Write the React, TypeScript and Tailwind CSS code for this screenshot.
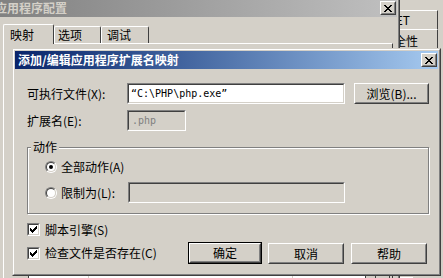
import React from "react";

/* ── Classic 3D frames ─────────────────────────────────── */
function Raised({ className = "", children }: { className?: string; children?: React.ReactNode }) {
  return (
    <div className={`border border-t-white border-l-white border-b-[#404040] border-r-[#404040] bg-[#d4d0c8] ${className}`}>
      <div className="w-full h-full border border-t-[#d4d0c8] border-l-[#d4d0c8] border-b-[#808080] border-r-[#808080] flex items-center justify-center">
        {children}
      </div>
    </div>
  );
}

function Sunken({ className = "", inner = "", children }: { className?: string; inner?: string; children?: React.ReactNode }) {
  return (
    <div className={`border border-t-[#808080] border-l-[#808080] border-b-white border-r-white ${className}`}>
      <div className={`w-full h-full border border-t-[#404040] border-l-[#404040] border-b-[#d4d0c8] border-r-[#d4d0c8] flex items-center ${inner}`}>
        {children}
      </div>
    </div>
  );
}

/* ── Pixel glyphs ──────────────────────────────────────── */
const X_PIXELS = [
  [0, 0], [1, 0], [6, 0], [7, 0],
  [1, 1], [2, 1], [5, 1], [6, 1],
  [2, 2], [3, 2], [4, 2], [5, 2],
  [3, 3], [4, 3],
  [2, 4], [3, 4], [4, 4], [5, 4],
  [1, 5], [2, 5], [5, 5], [6, 5],
  [0, 6], [1, 6], [6, 6], [7, 6],
];

const CHECK_PIXELS = [
  [6, 0],
  [5, 1], [6, 1],
  [0, 2], [4, 2], [5, 2], [6, 2],
  [0, 3], [1, 3], [3, 3], [4, 3], [5, 3],
  [0, 4], [1, 4], [2, 4], [3, 4], [4, 4],
  [1, 5], [2, 5], [3, 5],
  [2, 6],
];

function PixelGlyph({ pixels, w, h }: { pixels: number[][]; w: number; h: number }) {
  return (
    <svg width={w} height={h} viewBox={`0 0 ${w} ${h}`} shapeRendering="crispEdges">
      {pixels.map(([x, y]) => (
        <rect key={`${x}-${y}`} x={x} y={y} width="1" height="1" fill="#000" />
      ))}
    </svg>
  );
}

function CloseButton() {
  return (
    <Raised className="w-[16px] h-[14px]">
      <PixelGlyph pixels={X_PIXELS} w={8} h={7} />
    </Raised>
  );
}

function Checkbox() {
  return (
    <Sunken className="w-[13px] h-[13px] shrink-0" inner="bg-white justify-center">
      <PixelGlyph pixels={CHECK_PIXELS} w={7} h={7} />
    </Sunken>
  );
}

function Radio({ checked }: { checked?: boolean }) {
  return (
    <div className="w-[12px] h-[12px] shrink-0 rounded-full border border-t-[#808080] border-l-[#808080] border-b-white border-r-white">
      <div className="w-full h-full rounded-full border border-t-[#404040] border-l-[#404040] border-b-[#d4d0c8] border-r-[#d4d0c8] bg-white flex items-center justify-center">
        {checked && <div className="w-[4px] h-[4px] rounded-full bg-black" />}
      </div>
    </div>
  );
}

/* ── Page ──────────────────────────────────────────────── */
export default function App() {
  return (
    <div className="relative w-[443px] h-[278px] overflow-hidden bg-[#d4d0c8] font-['Noto_Sans_CJK_SC',sans-serif] text-[12px] leading-[14px] text-black">
      {/* Properties window far behind (tabs peeking out) */}
      <div className="absolute left-[330px] top-0 w-[113px] h-[278px] bg-[#d4d0c8]">
        <div className="mt-[10px] w-[108px] h-[19px] border-t border-t-white border-r border-r-[#404040] flex items-center justify-end pr-[27px]">
          ASP.NET
        </div>
        <div className="w-[108px] h-[22px] border-t border-t-white border-r border-r-[#404040] flex items-center justify-end pr-[19px]">
          安全性
        </div>
        <div className="mt-[226px] ml-[70px] w-[13px] h-[10px] bg-white" />
      </div>

      {/* Application configuration dialog (inactive) */}
      <div className="absolute left-[-12px] top-[-4px] w-[412px] h-[300px] bg-[#d4d0c8] border border-t-[#d4d0c8] border-l-[#d4d0c8] border-b-[#404040] border-r-[#404040]">
        <div className="w-full h-full border border-t-white border-l-white border-b-[#808080] border-r-[#808080] p-px flex flex-col">
          <div className="h-[18px] shrink-0 flex items-center justify-between pl-[4px] pr-[1px] bg-linear-to-r from-[#808080] to-[#c0c0c0]">
            <span className="font-bold text-[#d4d0c8]">应用程序配置</span>
            <CloseButton />
          </div>

          <div className="mt-[7px] ml-[12px] h-[19px] flex items-end">
            <div className="relative z-10 -mb-px w-[51px] h-[20px] rounded-t-[2px] bg-[#d4d0c8] border-t border-l border-t-white border-l-white border-r border-r-[#404040] flex items-center pl-[6px]">
              映射
            </div>
            <div className="w-[47px] h-[17px] rounded-t-[2px] border-t border-l border-t-white border-l-white border-r border-r-[#404040] flex items-center pl-[3px]">
              选项
            </div>
            <div className="w-[48px] h-[17px] rounded-t-[2px] border-t border-l border-t-white border-l-white border-r border-r-[#404040] flex items-center pl-[5px]">
              调试
            </div>
          </div>

          <div className="ml-[12px] mr-[4px] flex-1 border-t border-l border-t-white border-l-white border-r border-r-[#404040]">
            <div className="mt-[231px] ml-[24px] h-[20px] flex">
              <div className="w-[61px] bg-white border-l border-l-[#404040] border-r border-r-[#d4d0c8]" />
              <div className="w-[204px] bg-white border-r border-r-[#d4d0c8]" />
              <div className="w-[73px] bg-white border-r border-r-[#404040]" />
              <div className="w-[10px] border-r border-r-[#404040]" />
              <div className="w-[14px] border-r border-r-[#404040]" />
            </div>
          </div>
        </div>
      </div>

      {/* Add / edit extension mapping dialog (active) */}
      <div className="absolute left-[12px] top-[48px] w-[429px] h-[228px] bg-[#d4d0c8] border border-t-[#d4d0c8] border-l-[#d4d0c8] border-b-[#404040] border-r-[#404040]">
        <div className="w-full h-full border border-t-white border-l-white border-b-[#808080] border-r-[#808080] p-px flex flex-col">
          <div className="h-[18px] shrink-0 flex items-center justify-between pl-[3px] pr-[1px] bg-linear-to-r from-[#0a246a] to-[#a6caf0]">
            <span className="font-bold text-white">添加/编辑应用程序扩展名映射</span>
            <CloseButton />
          </div>

          <div className="flex flex-col pl-[12px]">
            {/* Executable */}
            <div className="mt-[14px] h-[21px] flex items-center">
              <span className="w-[100px]">可执行文件(X):</span>
              <Sunken className="w-[218px] h-[21px]" inner="bg-white pl-[2px]">
                <span className="font-['DejaVu_Sans_Mono',monospace] text-[10px]">{"\u201CC:\\PHP\\php.exe\u201D"}</span>
              </Sunken>
              <Raised className="ml-[9px] w-[75px] h-[21px]">浏览(B)...</Raised>
            </div>

            {/* Extension */}
            <div className="mt-[6px] h-[21px] flex items-center">
              <span className="w-[100px]">扩展名(E):</span>
              <Sunken className="w-[59px] h-[21px]" inner="bg-[#d4d0c8] pl-[3px]">
                <span className="font-['DejaVu_Sans_Mono',monospace] text-[10px] text-[#808080]">.php</span>
              </Sunken>
            </div>

            {/* Actions group */}
            <div className="relative mt-[16px] w-[402px] h-[67px] border border-[#808080] shadow-[inset_1px_1px_0_#fff,1px_1px_0_#fff] pt-[9px] pl-[17px]">
              <span className="absolute left-[3px] -top-[8px] px-[2px] bg-[#d4d0c8]">动作</span>
              <div className="h-[20px] flex items-center gap-[4px]">
                <Radio checked />
                <span>全部动作(A)</span>
              </div>
              <div className="mt-[5px] h-[21px] flex items-center">
                <div className="w-[83px] flex items-center gap-[4px]">
                  <Radio />
                  <span>限制为(L):</span>
                </div>
                <Sunken className="w-[217px] h-[21px]" inner="bg-[#d4d0c8]" />
              </div>
            </div>

            {/* Script engine */}
            <div className="mt-[9px] h-[13px] flex items-center gap-[5px]">
              <Checkbox />
              <span>脚本引擎(S)</span>
            </div>

            {/* Verify file + buttons */}
            <div className="mt-[6px] h-[22px] flex items-start">
              <div className="w-[161px] h-[22px] flex items-center gap-[5px]">
                <Checkbox />
                <span>检查文件是否存在(C)</span>
              </div>
              <div className="w-[74px] h-[22px] border border-black">
                <Raised className="w-full h-full">确定</Raised>
              </div>
              <Raised className="mt-px ml-[6px] w-[76px] h-[21px]">取消</Raised>
              <Raised className="mt-px ml-[7px] w-[76px] h-[21px]">帮助</Raised>
            </div>
          </div>
        </div>
      </div>
    </div>
  );
}
